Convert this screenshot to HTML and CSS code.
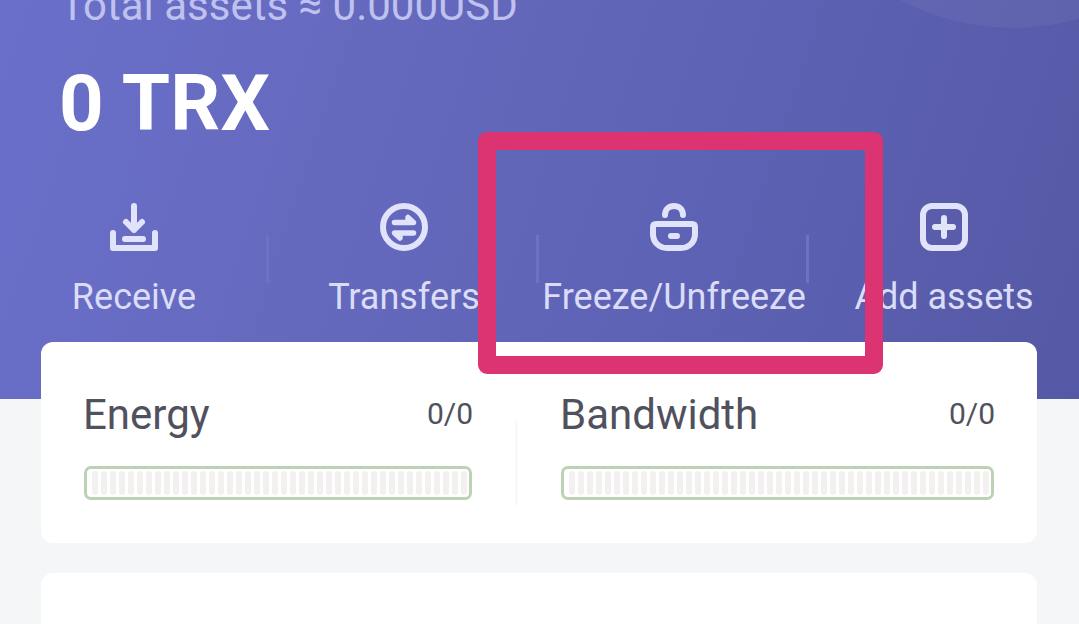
FILE: index.html
```html
<!DOCTYPE html>
<html lang="en">
<head>
    <meta charset="UTF-8">
    <meta name="viewport" content="width=device-width, initial-scale=1.0">
    <title>Wallet</title>
    <link rel="stylesheet" href="styles.css">
</head>
<body>
    <!-- Balance and actions -->
    <header class="wallet">
        <div class="circle"></div>
        <p class="total"><span>Total assets ≈ 0.000USD</span></p>
        <h1 class="balance"><span>0 TRX</span></h1>
        <nav class="actions">
            <a class="action">
                <svg class="icon" viewBox="0 0 48 48">
                    <path d="M3 30v15h42V30M15 36h18M24 3v24M16 19l8 8 8-8"/>
                </svg>
                <span>Receive</span>
            </a>
            <a class="action">
                <svg class="icon" viewBox="0 0 48 48">
                    <circle cx="24" cy="24" r="21"/>
                    <path class="arrow" d="M14.500 19.500h19l-5.500-5v4M33.500 30h-19l5.500 5v-4"/>
                </svg>
                <span>Transfers</span>
            </a>
            <a class="action">
                <svg class="icon" viewBox="0 0 48 48">
                    <path d="M15 12C15 6.500 19 3 24 3s9 3.500 9 9"/>
                    <path d="M6 21h36q3 0 3 3v7c0 8-6 14-14 14H17C9 45 3 39 3 31v-7q0-3 3-3zM21 33h6"/>
                </svg>
                <span>Freeze/Unfreeze</span>
            </a>
            <a class="action">
                <svg class="icon" viewBox="0 0 48 48">
                    <rect x="3" y="3" width="42" height="42" rx="9"/>
                    <path d="M24 15v18M15 24h18"/>
                </svg>
                <span>Add assets</span>
            </a>
        </nav>
    </header>

    <!-- Resources -->
    <section class="card resources">
        <div class="resource energy">
            <div class="resource-head">
                <h2>Energy</h2>
                <span class="amount">0/0</span>
            </div>
            <div class="meter">
                <svg width="378" height="24">
                    <defs>
                        <pattern id="ticks" width="9" height="24" patternUnits="userSpaceOnUse">
                            <rect class="tick" width="6" height="24" rx="3"/>
                        </pattern>
                    </defs>
                    <rect width="378" height="24" fill="url(#ticks)"/>
                </svg>
            </div>
        </div>
        <div class="divider"></div>
        <div class="resource bandwidth">
            <div class="resource-head">
                <h2>Bandwidth</h2>
                <span class="amount">0/0</span>
            </div>
            <div class="meter">
                <svg width="423" height="24">
                    <rect width="423" height="24" fill="url(#ticks)"/>
                </svg>
            </div>
        </div>
    </section>

    <section class="card assets"></section>

    <!-- Marker around Freeze/Unfreeze -->
    <div class="highlight"></div>
</body>
</html>
```
FILE: styles.css
```css
* {
    box-sizing: border-box;
}
body {
    position: relative;
    margin: 0;
    height: 624px;
    overflow: hidden;
    font-family: Roboto, sans-serif;
    background-color: #f5f6f8;
}
h1, h2, p {
    margin: 0;
    font-weight: 400;
}
/* Header */
.wallet {
    position: relative;
    height: 399px;
    overflow: hidden;
    background: linear-gradient(108deg, #6a6fca 0%, #6569bd 35%, #5c60b1 72%, #5558a4 100%);
}
.circle {
    position: absolute;
    left: 771px;
    top: -456px;
    width: 484px;
    height: 484px;
    border-radius: 50%;
    background: rgba(255, 255, 255, 0.045);
}
.total {
    height: 26px;
    margin-top: -19px;
    padding-left: 60px;
    font-size: 42px;
    line-height: 50px;
    color: #bfc1ee;
    white-space: nowrap;
}
.balance {
    height: 92px;
    margin-top: 51px;
    padding-left: 59px;
    font-size: 78px;
    font-weight: 700;
    line-height: 92px;
    letter-spacing: 0.3px;
    color: #fff;
}
/* Actions */
.actions {
    display: grid;
    grid-template-columns: repeat(4, 270px);
    margin: 53px 0 0 -1px;
}
.action {
    position: relative;
    display: flex;
    flex-direction: column;
    align-items: center;
    gap: 25px;
    font-size: 36px;
    line-height: 42px;
    color: #dadcf8;
    white-space: nowrap;
}
.action:not(:last-child)::after {
    content: "";
    position: absolute;
    right: 0;
    top: 32px;
    width: 3px;
    height: 48px;
    background: #6f72c2;
}
.icon {
    width: 48px;
    height: 48px;
    fill: none;
    stroke: #e1e3fa;
    stroke-width: 6;
    stroke-linecap: round;
    stroke-linejoin: round;
}
.arrow {
    stroke-width: 5.5;
}
/* Cards */
.card {
    position: relative;
    width: 996px;
    margin-left: 41px;
    border-radius: 12px;
    background: #fff;
}
.resources {
    display: flex;
    height: 201px;
    margin-top: -57px;
    padding: 47px 43px 0;
}
.energy {
    width: 388px;
}
.bandwidth {
    width: 433px;
}
.resource-head {
    display: flex;
    justify-content: space-between;
    height: 50px;
    color: #50515d;
}
.resource-head h2 {
    margin-left: -1px;
    font-size: 42px;
    line-height: 52px;
}
.amount {
    margin-right: -1px;
    font-size: 30px;
    line-height: 50px;
}
.meter {
    height: 34px;
    margin-top: 27px;
    padding: 2px 0 0 5px;
    border: 3px solid #bdd2b5;
    border-radius: 7px;
}
.meter svg {
    display: block;
}
.tick {
    fill: #f2f1f0;
}
.divider {
    width: 3px;
    height: 84px;
    margin: 32px 43px 0;
    background: #f8f8f9;
}
.assets {
    height: 80px;
    margin-top: 30px;
}
.highlight {
    position: absolute;
    left: 478px;
    top: 132px;
    width: 405px;
    height: 242px;
    border: 18px solid #dc3373;
    border-radius: 9px;
}
```
